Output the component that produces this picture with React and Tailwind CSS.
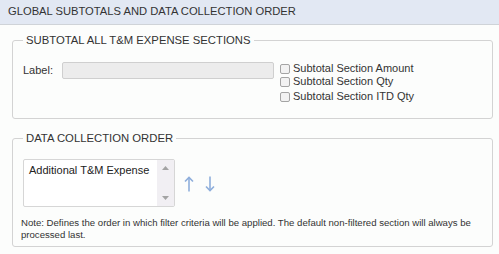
import React from "react";

const OPTIONS = [
  "Subtotal Section Amount",
  "Subtotal Section Qty",
  "Subtotal Section ITD Qty",
];

function Arrow({ down }) {
  return (
    <svg width="10" height="16" viewBox="0 0 10 16" className="text-[#8eaedb]">
      <g
        fill="none"
        stroke="currentColor"
        strokeWidth="1.6"
        transform={down ? "rotate(180 5 8)" : undefined}
      >
        <path d="M5 1.5 V15.5" />
        <path d="M1 5.5 L5 1.5 L9 5.5" />
      </g>
    </svg>
  );
}

export default function App() {
  return (
    <div
      className="w-[499px] h-[254px] bg-[#fcfdfc] text-[#333] overflow-hidden"
      style={{ fontFamily: '"Liberation Sans", Arial, sans-serif' }}
    >
      {/* header */}
      <div className="h-[25px] bg-[#e2e8f3] border-b border-[#cfd3d8] px-[8px] flex items-center text-[11.2px] leading-none">
        GLOBAL SUBTOTALS AND DATA COLLECTION ORDER
      </div>

      <div className="px-[12px] pt-[8px]">
        {/* subtotal section */}
        <fieldset className="w-[481px] border border-[#d3d3d3] rounded-[3px] pl-[10px] pr-[10px] pb-[15px]">
          <legend className="px-[3px] text-[11.3px] leading-[14px]">
            SUBTOTAL ALL T&amp;M EXPENSE SECTIONS
          </legend>
          <div className="flex items-start mt-[15px]">
            <div className="flex items-center h-[17px] w-[39px] text-[11px]">Label:</div>
            <div className="w-[212px] h-[17px] bg-[#ececec] border border-[#cfcfcf] rounded-[2px]" />
            <div className="ml-[6px] flex flex-col text-[11px] leading-[13px]">
              {OPTIONS.map((o, i) => (
                <label key={o} className={`flex items-center ${i === 2 ? "mt-[2px]" : ""}`}>
                  <span className="w-[10px] h-[10px] border border-[#a4a4a4] rounded-[2px] bg-[#f2f2f2] mr-[3px]" />
                  {o}
                </label>
              ))}
            </div>
          </div>
        </fieldset>

        {/* data collection order */}
        <fieldset className="w-[481px] mt-[12px] border border-[#d3d3d3] rounded-[3px] pl-[8px] pr-[10px] pb-[5px]">
          <legend className="px-[3px] ml-[2px] text-[11.3px] leading-[14px]">
            DATA COLLECTION ORDER
          </legend>
          <div className="flex items-center ml-[2px] mt-[14px]">
            <div className="flex w-[152px] h-[48px] border border-[#d6d6d6] rounded-[2px] bg-white overflow-hidden">
              <div className="flex-1 px-[5px] pt-[4px] text-[11px] leading-[13px] text-[#222]">
                Additional T&amp;M Expense
              </div>
              <div className="w-[17px] bg-[#f1eff3] flex flex-col items-center justify-between py-[6px]">
                <svg width="7" height="4" viewBox="0 0 7 4">
                  <path d="M0 4 L3.5 0 L7 4 Z" fill="#a3a3a3" />
                </svg>
                <svg width="7" height="4" viewBox="0 0 7 4">
                  <path d="M0 0 L3.5 4 L7 0 Z" fill="#a3a3a3" />
                </svg>
              </div>
            </div>
            <div className="flex items-center gap-[11px] ml-[9px] mt-[2px]">
              <Arrow />
              <Arrow down />
            </div>
          </div>
          <p className="mt-[10px] text-[9.6px] leading-[12px] text-[#333]">
            Note: Defines the order in which filter criteria will be applied. The default non-filtered section will always be
            processed last.
          </p>
        </fieldset>
      </div>
    </div>
  );
}
